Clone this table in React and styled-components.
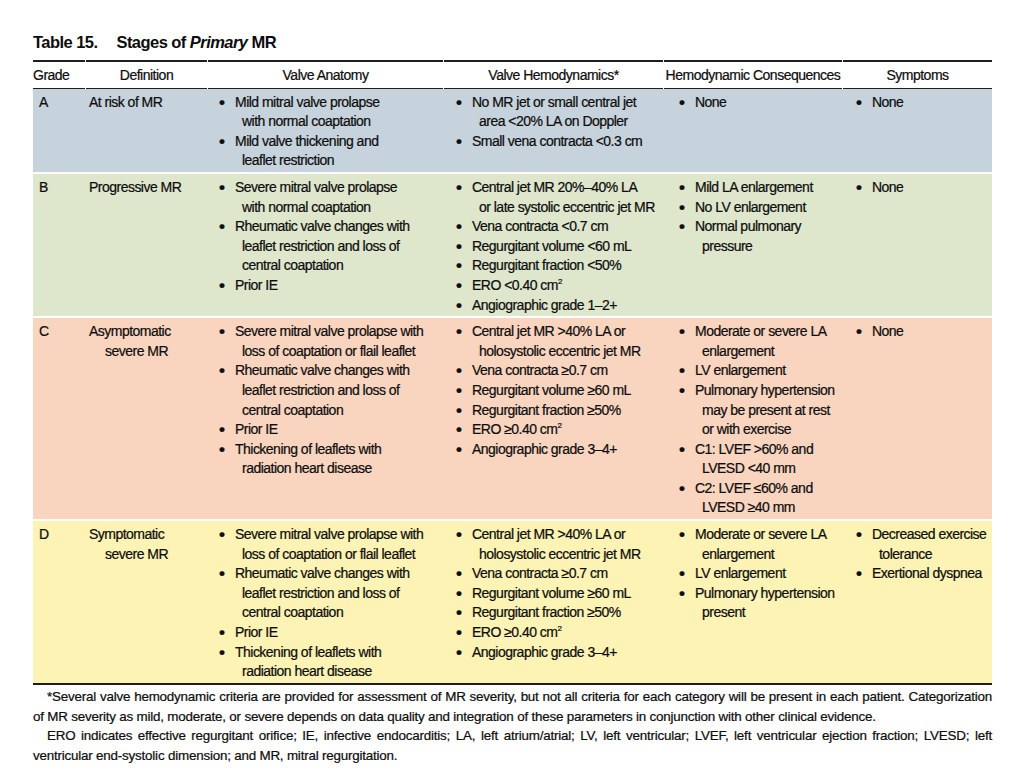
import React from "react";
import styled, { createGlobalStyle } from "styled-components";

const FONT = `"Liberation Sans", Arial, sans-serif`;

const Global = createGlobalStyle`
  html, body { margin: 0; padding: 0; background: #ffffff; }
  body { font-family: ${FONT}; color: #0d0d0d; -webkit-text-stroke: 0.22px #0d0d0d; }
`;

const Page = styled.div`
  width: 959px;
  padding: 32px 0 0 33px;
`;

const Title = styled.h1`
  margin: 0 0 8px 0;
  font-size: 16.5px;
  line-height: 20px;
  font-weight: 700;
  letter-spacing: -0.55px;
  display: flex;
  gap: 19px;
  white-space: nowrap;
  -webkit-text-stroke: 0;
`;

const COLS = "53px 122px 236px 220px 179px 149px";

const HeaderRow = styled.div`
  display: grid;
  grid-template-columns: ${COLS};
`;

const HeadCell = styled.div`
  border-top: 2px solid #1e1e1e;
  border-bottom: 1.5px solid #1e1e1e;
  margin-right: ${(p) => (p.$last ? "0" : "1px")};
  padding: 4px 0 2px 0;
  font-size: 14px;
  line-height: 19.6px;
  letter-spacing: -0.5px;
  text-align: ${(p) => (p.$left ? "left" : "center")};
  white-space: nowrap;
`;

const Body = styled.div`
  display: flex;
  flex-direction: column;
  gap: 2px;
  border-bottom: 2px solid #1e1e1e;
`;

const Row = styled.div`
  display: grid;
  grid-template-columns: ${COLS};
  background: ${(p) => p.$bg};
  padding: 4px 0 1px 0;
`;

const Cell = styled.div`
  padding-left: ${(p) => p.$pad}px;
  font-size: 14px;
  line-height: 19.6px;
  letter-spacing: -0.52px;
  white-space: nowrap;
`;

const Hanging = styled.div`
  padding-left: ${(p) => p.$indent}px;
  text-indent: -${(p) => p.$indent}px;
`;

const Item = styled.div`
  display: flex;
`;

const Bullet = styled.span`
  flex: 0 0 16px;
  font-size: 17px;
  font-weight: 700;
  margin-left: -1px;
`;

const ItemText = styled.div`
  padding-left: 7px;
  text-indent: -7px;
`;

const Foot = styled.div`
  padding-top: 2px;
  font-size: 13.4px;
  line-height: 19.7px;
  letter-spacing: -0.2px;
`;

const FootLine = styled.div`
  white-space: nowrap;
  text-align: ${(p) => (p.$just ? "justify" : "left")};
  text-align-last: ${(p) => (p.$just ? "justify" : "left")};
  padding-left: ${(p) => (p.$first ? "14px" : "0")};
`;

const Sup = styled.sup`
  font-size: 8px;
  line-height: 0;
  vertical-align: 6px;
`;

const cm2 = (pre) => (
  <>
    {pre} cm<Sup>2</Sup>
  </>
);

const rows = [
  {
    bg: "#c7d3dc",
    grade: "A",
    def: ["At risk of MR"],
    anat: [
      ["Mild mitral valve prolapse", "with normal coaptation"],
      ["Mild valve thickening and", "leaflet restriction"],
    ],
    hemo: [
      ["No MR jet or small central jet", "area <20% LA on Doppler"],
      ["Small vena contracta <0.3 cm"],
    ],
    cons: [["None"]],
    symp: [["None"]],
  },
  {
    bg: "#dee6cc",
    grade: "B",
    def: ["Progressive MR"],
    anat: [
      ["Severe mitral valve prolapse", "with normal coaptation"],
      ["Rheumatic valve changes with", "leaflet restriction and loss of", "central coaptation"],
      ["Prior IE"],
    ],
    hemo: [
      ["Central jet MR 20%–40% LA", "or late systolic eccentric jet MR"],
      ["Vena contracta <0.7 cm"],
      ["Regurgitant volume <60 mL"],
      ["Regurgitant fraction <50%"],
      [cm2("ERO <0.40")],
      ["Angiographic grade 1–2+"],
    ],
    cons: [
      ["Mild LA enlargement"],
      ["No LV enlargement"],
      ["Normal pulmonary", "pressure"],
    ],
    symp: [["None"]],
  },
  {
    bg: "#f9d5c0",
    grade: "C",
    def: ["Asymptomatic", "severe MR"],
    anat: [
      ["Severe mitral valve prolapse with", "loss of coaptation or flail leaflet"],
      ["Rheumatic valve changes with", "leaflet restriction and loss of", "central coaptation"],
      ["Prior IE"],
      ["Thickening of leaflets with", "radiation heart disease"],
    ],
    hemo: [
      ["Central jet MR >40% LA or", "holosystolic eccentric jet MR"],
      ["Vena contracta ≥0.7 cm"],
      ["Regurgitant volume ≥60 mL"],
      ["Regurgitant fraction ≥50%"],
      [cm2("ERO ≥0.40")],
      ["Angiographic grade 3–4+"],
    ],
    cons: [
      ["Moderate or severe LA", "enlargement"],
      ["LV enlargement"],
      ["Pulmonary hypertension", "may be present at rest", "or with exercise"],
      ["C1: LVEF >60% and", "LVESD <40 mm"],
      ["C2: LVEF ≤60% and", "LVESD ≥40 mm"],
    ],
    symp: [["None"]],
  },
  {
    bg: "#fcf3b4",
    grade: "D",
    def: ["Symptomatic", "severe MR"],
    anat: [
      ["Severe mitral valve prolapse with", "loss of coaptation or flail leaflet"],
      ["Rheumatic valve changes with", "leaflet restriction and loss of", "central coaptation"],
      ["Prior IE"],
      ["Thickening of leaflets with", "radiation heart disease"],
    ],
    hemo: [
      ["Central jet MR >40% LA or", "holosystolic eccentric jet MR"],
      ["Vena contracta ≥0.7 cm"],
      ["Regurgitant volume ≥60 mL"],
      ["Regurgitant fraction ≥50%"],
      [cm2("ERO ≥0.40")],
      ["Angiographic grade 3–4+"],
    ],
    cons: [
      ["Moderate or severe LA", "enlargement"],
      ["LV enlargement"],
      ["Pulmonary hypertension", "present"],
    ],
    symp: [["Decreased exercise", "tolerance"], ["Exertional dyspnea"]],
  },
];

const Lines = ({ lines }) =>
  lines.map((l, i) => (
    <React.Fragment key={i}>
      {i > 0 && <br />}
      {l}
    </React.Fragment>
  ));

const BulletList = ({ items }) =>
  items.map((lines, i) => (
    <Item key={i}>
      <Bullet>•</Bullet>
      <ItemText>
        <Lines lines={lines} />
      </ItemText>
    </Item>
  ));

const headers = [
  "Grade",
  "Definition",
  "Valve Anatomy",
  "Valve Hemodynamics*",
  "Hemodynamic Consequences",
  "Symptoms",
];

export default function App() {
  return (
    <>
      <Global />
      <Page>
        <Title>
          <span>Table 15.</span>
          <span>
            Stages of <i>Primary</i> MR
          </span>
        </Title>
        <HeaderRow>
          {headers.map((h, i) => (
            <HeadCell key={h} $left={i === 0} $last={i === headers.length - 1}>
              {h}
            </HeadCell>
          ))}
        </HeaderRow>
        <Body>
          {rows.map((r) => (
            <Row key={r.grade} $bg={r.bg}>
              <Cell $pad={6}>{r.grade}</Cell>
              <Cell $pad={3}>
                <Hanging $indent={16}>
                  <Lines lines={r.def} />
                </Hanging>
              </Cell>
              <Cell $pad={12}>
                <BulletList items={r.anat} />
              </Cell>
              <Cell $pad={13}>
                <BulletList items={r.hemo} />
              </Cell>
              <Cell $pad={16}>
                <BulletList items={r.cons} />
              </Cell>
              <Cell $pad={14}>
                <BulletList items={r.symp} />
              </Cell>
            </Row>
          ))}
        </Body>
        <Foot>
          <FootLine $just $first>
            *Several valve hemodynamic criteria are provided for assessment of MR severity, but not all criteria for each category will be present in each patient. Categorization
          </FootLine>
          <FootLine>
            of MR severity as mild, moderate, or severe depends on data quality and integration of these parameters in conjunction with other clinical evidence.
          </FootLine>
          <FootLine $just $first>
            ERO indicates effective regurgitant orifice; IE, infective endocarditis; LA, left atrium/atrial; LV, left ventricular; LVEF, left ventricular ejection fraction; LVESD; left
          </FootLine>
          <FootLine>ventricular end-systolic dimension; and MR, mitral regurgitation.</FootLine>
        </Foot>
      </Page>
    </>
  );
}
